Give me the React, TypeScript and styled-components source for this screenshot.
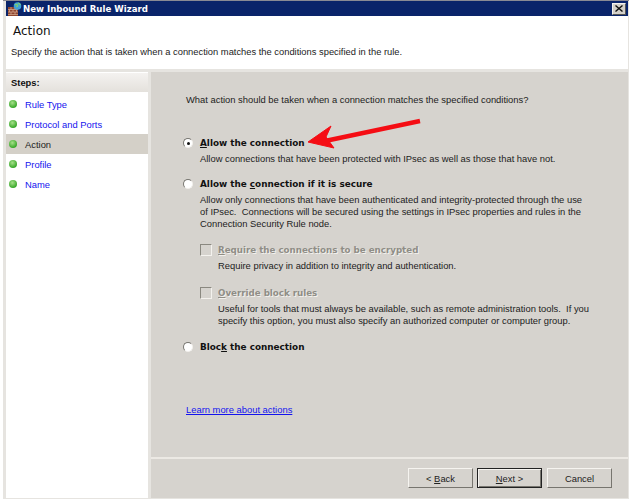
import React from "react";
import styled, { createGlobalStyle } from "styled-components";

const Global = createGlobalStyle`
  html, body { margin: 0; padding: 0; background: #fff; }
  #root { width: 629px; height: 499px; overflow: hidden; }
`;

const Page = styled.div`
  position: relative;
  width: 629px;
  height: 499px;
  box-sizing: border-box;
  padding: 0 0 0 3px;
  background: #fff;
  font-family: "Liberation Sans", Arial, sans-serif;
  font-size: 9.4px;
  color: #1c1c1c;
`;

const Win = styled.div`
  width: 100%;
  height: 100%;
  box-sizing: border-box;
  display: flex;
  flex-direction: column;
  background: #e6e4e0;
  border-top: 1px solid #8a8a94;
  padding-left: 3px;
  padding-right: 1px;
  padding-bottom: 1px;
`;

const TitleBar = styled.div`
  height: 15px;
  flex: none;
  display: flex;
  align-items: center;
  background: #0a246a;
  color: #fff;
  font-weight: 700;
  padding: 0 2px;
  gap: 1px;
`;

const TitleText = styled.span`
  flex: 1;
  font-family: "DejaVu Sans", sans-serif;
  font-size: 8.6px;
`;

const CloseButton = styled.div`
  width: 14px;
  height: 12px;
  box-sizing: border-box;
  background: #d4d0c8;
  border: 1px solid;
  border-color: #f4f2ee #555 #555 #f4f2ee;
  display: flex;
  align-items: center;
  justify-content: center;
`;

const Header = styled.div`
  flex: none;
  height: 53px;
  box-sizing: border-box;
  background: #fff;
  padding: 8px 0 0 7px;
`;

const HeaderTitle = styled.div`
  font-family: "DejaVu Sans", sans-serif;
  font-size: 12px;
  line-height: 14px;
  color: #111;
`;

const HeaderSub = styled.div`
  margin-top: 8px;
  margin-left: -2px;
  line-height: 13px;
  font-size: 9.35px;
`;

const Body = styled.div`
  flex: 1;
  min-height: 0;
  display: flex;
  gap: 3px;
  margin-top: 3px;
`;

const Side = styled.div`
  width: 142px;
  flex: none;
  background: #fff;
`;

const StepsHead = styled.div`
  height: 19px;
  box-sizing: border-box;
  margin-top: 1px;
  padding: 3px 0 0 5px;
  background: linear-gradient(#f4f2f0, #e4e1dc);
  font-weight: 700;
  line-height: 13px;
  color: #111;
`;

const StepList = styled.div`
  padding-top: 2px;
`;

const Step = styled.div<{ $active?: boolean }>`
  height: 20px;
  display: flex;
  align-items: center;
  padding-left: 3px;
  gap: 8px;
  background: ${(p) => (p.$active ? "#d4d0c8" : "transparent")};
  color: ${(p) => (p.$active ? "#222" : "#1414ee")};
`;

const Dot = styled.span`
  width: 8px;
  height: 8px;
  flex: none;
  border-radius: 50%;
  background: radial-gradient(circle at 42% 35%, #a6e08a, #3aa82a 70%);
`;

const Main = styled.div`
  flex: 1;
  min-width: 0;
  display: flex;
  flex-direction: column;
  background: #d6d3ce;
`;

const Content = styled.div`
  height: 387px;
  flex: none;
  box-sizing: border-box;
  padding: 22px 0 0 35px;
  border-bottom: 2px solid #ece9e4;
`;

const Question = styled.div`
  line-height: 12px;
  margin-bottom: 31px;
`;

const Option = styled.div<{ $gap?: number }>`
  display: grid;
  grid-template-columns: 14px 1fr;
  margin-bottom: ${(p) => p.$gap ?? 0}px;
`;

const Radio = styled.span<{ $checked?: boolean }>`
  width: 10px;
  height: 10px;
  margin-top: 1px;
  margin-left: -3px;
  box-sizing: border-box;
  border-radius: 50%;
  background: #fff;
  border: 1px solid #77756f;
  border-right-color: #f2f0ec;
  border-bottom-color: #f2f0ec;
  display: flex;
  align-items: center;
  justify-content: center;
  &::after {
    content: "";
    width: 3px;
    height: 3px;
    border-radius: 50%;
    background: ${(p) => (p.$checked ? "#111" : "transparent")};
  }
`;

const OptionLabel = styled.div`
  font-family: "DejaVu Sans", sans-serif;
  font-weight: 700;
  font-size: 8.85px;
  line-height: 13px;
  color: #111;
  u { text-underline-offset: 1px; }
`;

const Desc = styled.div`
  line-height: 12px;
  margin-top: 3px;
  white-space: pre;
`;

const Sub = styled.div<{ $gap?: number }>`
  display: grid;
  grid-template-columns: 18px 1fr;
  margin-left: 14px;
  margin-bottom: ${(p) => p.$gap ?? 0}px;
`;

const Check = styled.span`
  width: 12px;
  height: 12px;
  box-sizing: border-box;
  background: #d6d3ce;
  border: 1px solid;
  border-color: #8a8880 #f4f2ee #f4f2ee #8a8880;
`;

const SubLabel = styled(OptionLabel)`
  color: #8f8d86;
  text-shadow: 1px 1px 0 #f2f0ec;
  font-size: 8.7px;
`;

const LearnMore = styled.a`
  display: block;
  margin-top: 49px;
  color: #1414ee;
  text-decoration: underline;
  line-height: 13px;
`;

const Footer = styled.div`
  flex: 1;
  display: flex;
  justify-content: flex-end;
  align-items: flex-start;
  padding: 9px 16px 0 0;
  gap: 4px;
`;

const Btn = styled.div<{ $default?: boolean; $ml?: number }>`
  width: 65px;
  height: 20px;
  box-sizing: border-box;
  margin-left: ${(p) => p.$ml ?? 0}px;
  display: flex;
  align-items: center;
  justify-content: center;
  background: #d6d3ce;
  border: 1px solid;
  border-color: ${(p) => (p.$default ? "#222" : "#f6f4f0 #77756f #77756f #f6f4f0")};
  box-shadow: ${(p) => (p.$default ? "inset 1px 1px 0 #f6f4f0, inset -1px -1px 0 #77756f" : "none")};
  color: #222;
  white-space: pre;
  u { text-underline-offset: 1px; }
`;

const Arrow = styled.svg`
  position: absolute;
  left: 305px;
  top: 115px;
`;

const Firewall = () => (
  <svg width="14" height="14" viewBox="0 0 14 14">
    <rect x="0" y="5" width="10" height="9" fill="#8f4630" />
    <path d="M0 7.5h10M0 10h10M0 12.5h10M3 5v2.5M7 5v2.5M1.5 7.5V10M5 7.5V10M8.5 7.5V10M3 10v2.5M7 10v2.5" stroke="#d9ae92" strokeWidth=".7" />
    <circle cx="9.5" cy="4" r="3.8" fill="#3f9fd8" />
    <path d="M7 3c1-1 2-.6 2.6.3.5.9-.6 1.5-1.4 1.3M10 1c1 .4 2 1 2.4 2" stroke="#7fd06a" strokeWidth="1.2" fill="none" />
  </svg>
);

const steps = ["Rule Type", "Protocol and Ports", "Action", "Profile", "Name"];

export default function App() {
  return (
    <Page>
      <Global />
      <Win>
        <TitleBar>
          <Firewall />
          <TitleText>New Inbound Rule Wizard</TitleText>
          <CloseButton>
            <svg width="8" height="7" viewBox="0 0 8 7">
              <path d="M.5.5l7 6M7.5.5l-7 6" stroke="#111" strokeWidth="1.4" />
            </svg>
          </CloseButton>
        </TitleBar>
        <Header>
          <HeaderTitle>Action</HeaderTitle>
          <HeaderSub>Specify the action that is taken when a connection matches the conditions specified in the rule.</HeaderSub>
        </Header>
        <Body>
          <Side>
            <StepsHead>Steps:</StepsHead>
            <StepList>
              {steps.map((s) => (
                <Step key={s} $active={s === "Action"}>
                  <Dot />
                  {s}
                </Step>
              ))}
            </StepList>
          </Side>
          <Main>
            <Content>
              <Question>What action should be taken when a connection matches the specified conditions?</Question>
              <Option $gap={13}>
                <Radio $checked />
                <OptionLabel><u>A</u>llow the connection</OptionLabel>
                <span />
                <Desc>Allow connections that have been protected with IPsec as well as those that have not.</Desc>
              </Option>
              <Option $gap={14}>
                <Radio />
                <OptionLabel>Allow the <u>c</u>onnection if it is secure</OptionLabel>
                <span />
                <Desc>
                  {"Allow only connections that have been authenticated and integrity-protected through the use\nof IPsec.  Connections will be secured using the settings in IPsec properties and rules in the\nConnection Security Rule node."}
                </Desc>
              </Option>
              <Sub $gap={15}>
                <Check />
                <SubLabel><u>R</u>equire the connections to be encrypted</SubLabel>
                <span />
                <Desc>Require privacy in addition to integrity and authentication.</Desc>
              </Sub>
              <Sub $gap={14}>
                <Check />
                <SubLabel><u>O</u>verride block rules</SubLabel>
                <span />
                <Desc>
                  {"Useful for tools that must always be available, such as remote administration tools.  If you\nspecify this option, you must also specify an authorized computer or computer group."}
                </Desc>
              </Sub>
              <Option>
                <Radio />
                <OptionLabel>Bloc<u>k</u> the connection</OptionLabel>
              </Option>
              <LearnMore>Learn more about actions</LearnMore>
            </Content>
            <Footer>
              <Btn>&lt; <u>B</u>ack</Btn>
              <Btn $default><u>N</u>ext &gt;</Btn>
              <Btn $ml={1}>Cancel</Btn>
            </Footer>
          </Main>
        </Body>
      </Win>
      <Arrow width="120" height="40" viewBox="0 0 120 40">
        <path d="M115 6 L20 26" stroke="#f50d14" strokeWidth="4.5" fill="none" />
        <path d="M3 27 L26 11 L21 22 L29 33 Z" fill="#f50d14" stroke="#f50d14" strokeWidth="1" strokeLinejoin="round" />
      </Arrow>
    </Page>
  );
}
